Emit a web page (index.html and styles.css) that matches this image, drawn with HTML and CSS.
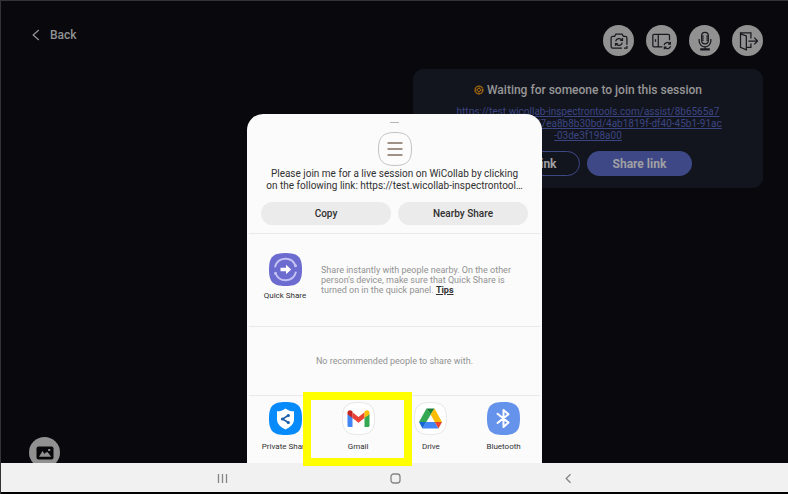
FILE: index.html
```html
<!DOCTYPE html>
<html lang="en">
<head>
<meta charset="utf-8">
<title>WiCollab session</title>
<link rel="stylesheet" href="styles.css">
</head>
<body>
<main class="session">
  <header class="topbar">
    <a class="back" href="#">
      <svg width="8" height="12" viewBox="0 0 8 12" fill="none" stroke="currentColor" stroke-width="1.3"><path d="M6.8 1 1.2 6l5.6 5"/></svg>
      Back
    </a>
    <div class="tools">
      <button class="round" aria-label="Switch camera">
        <svg viewBox="0 0 24 24"><path d="M15.500 20.500H4.500a2 2 0 0 1-2-2V8.500a2 2 0 0 1 2-2h2.200l1.600-2.700h7.400l1.600 2.700h2.200a2 2 0 0 1 2 2v8M18 20.500h3.500V18"/><path d="M8 12.500a4.200 4.200 0 0 1 7.600-1.600M16.200 8.500v2.800h-2.800M16 13.800a4.200 4.200 0 0 1-7.600 1.600M7.800 17.800V15h2.800"/></svg>
      </button>
      <button class="round" aria-label="Rotate screen">
        <svg viewBox="0 0 24 24"><path d="M12.500 19H2.500a1.500 1.500 0 0 1-1.500-1.500v-12A1.500 1.500 0 0 1 2.500 4h17A1.500 1.500 0 0 1 21 5.500V11M7.500 4v15M4.200 10v3"/><path d="M14.500 16.800a4 4 0 0 1 7-1.500M22 13v2.600h-2.600M22.300 18.200a4 4 0 0 1-7 1.500M14.800 22v-2.600h2.600"/></svg>
      </button>
      <button class="round" aria-label="Microphone">
        <svg viewBox="0 0 24 24"><rect x="8" y="1.500" width="8" height="14" rx="4"/><path d="M5 9.500V12a7 7 0 0 0 14 0V9.500M12 19v2M7 22.500v-1h10v1zM8.500 6h2M13.500 6h2M8.500 8.500h2M13.500 8.500h2M8.500 11h2M13.500 11h2"/></svg>
      </button>
      <button class="round" aria-label="Leave session">
        <svg viewBox="0 0 24 24"><path d="M3 3.500v16l7 3V6zM3 3.500V2.200h12.500V9M10 19.500h5.500V15M12.500 12H23M19.500 8l4 4-4 4"/></svg>
      </button>
    </div>
  </header>

  <section class="card">
    <h1 class="card-title">
      <svg width="10" height="10" viewBox="0 0 10 10" fill="none" stroke="#a5690f"><circle cx="5" cy="5" r="3.900" stroke-width="1.400" stroke-dasharray="2.200 .3"/><circle cx="5" cy="5" r="1.600"/><path d="M5 1v2.500M5 6.500V9M1 5h2.500M6.500 5H9" stroke-width=".7"/></svg>
      Waiting for someone to join this session
    </h1>
    <a class="card-link" href="#">https://test.wicollab-inspectrontools.com/assist/8b6565a7<br>-0c52-4f1e-9d3a-c47ea8b8b30bd/4ab1819f-df40-45b1-91ac<br>-03de3f198a00</a>
    <div class="card-actions">
      <button class="pill pill-outline">Copy link</button>
      <button class="pill pill-solid">Share link</button>
    </div>
  </section>

  <button class="round gallery" aria-label="Gallery">
    <svg viewBox="0 0 18 14"><rect class="frame" x=".5" y=".5" width="17" height="13" rx="2"/><path class="hills" d="M3 10.800 6.500 5l2 3 .8-1.200 2.200-.8 3.700 4.800zM12.200 3h2v2h-2z"/></svg>
  </button>
</main>

<nav class="sysbar">
  <button class="sys" aria-label="Recent apps"><svg width="11" height="11" viewBox="0 0 11 11"><path d="M1.500 1v9M5.500 1v9M9.500 1v9"/></svg></button>
  <button class="sys" aria-label="Home"><svg width="11" height="11" viewBox="0 0 11 11"><rect x="1" y="1" width="9" height="9" rx="2.800"/></svg></button>
  <button class="sys" aria-label="Go back"><svg width="11" height="11" viewBox="0 0 11 11"><path d="M7.500 1.200 3.200 5.500l4.300 4.300"/></svg></button>
</nav>

<section class="sheet" aria-label="Share">
  <div class="preview">
    <div class="handle"></div>
    <svg class="doc" viewBox="0 0 34 34"><path d="M17 .5C29 .5 33.500 5 33.500 17S29 33.500 17 33.500.5 29 .5 17 5 .5 17 .5z" fill="#fcfcfc" stroke="#c2c2c2"/><path d="M9.500 11h15M9.500 17h15M9.500 23h15" stroke="#a09187" stroke-width="2"/></svg>
    <p class="message">Please join me for a live session on WiCollab by clicking<br>on the following link: https://test.wicollab-inspectrontool…</p>
    <div class="preview-actions">
      <button class="soft">Copy</button>
      <button class="soft">Nearby Share</button>
    </div>
  </div>
  <div class="quick">
    <button class="app app-quick">
      <svg class="app-icon" viewBox="0 0 33 33"><path d="M16.500 0C29 0 33 4 33 16.500S29 33 16.500 33 0 29 0 16.500 4 0 16.500 0z" fill="#6c6bcf"/><path d="M6.200 13.500a10.700 10.700 0 0 1 20.200-1M26.800 19.500a10.700 10.700 0 0 1-20.200 1" fill="none" stroke="#c3c2f4" stroke-width="2" stroke-linecap="round"/><circle cx="26.500" cy="12.800" r="1.500" fill="#c3c2f4"/><circle cx="6.500" cy="20.200" r="1.500" fill="#c3c2f4"/><path d="M11.500 14.700h5.500v-3l5.200 4.800-5.200 4.800v-3h-5.500z" fill="#fff"/></svg>
      Quick Share
    </button>
    <p class="hint">Share instantly with people nearby. On the other person's device, make sure that Quick Share is turned on in the quick panel. <a class="tips" href="#">Tips</a></p>
  </div>
  <p class="empty">No recommended people to share with.</p>
  <div class="apps">
    <button class="app">
      <svg class="app-icon" viewBox="0 0 33 33"><path d="M16.500 0C29 0 33 4 33 16.500S29 33 16.500 33 0 29 0 16.500 4 0 16.500 0z" fill="#078bfb"/><path d="M16.500 6.500c2.500 2 5.500 2.800 8.500 2.800v8c0 5-4 8-8.500 10.200C12 25.300 8 22.300 8 17.300v-8c3 0 6-.8 8.500-2.800z" fill="#fff"/><path d="M19.300 13.500 13.500 17l5.800 3.500" fill="none" stroke="#1b5fa8" stroke-width="1.500"/><g fill="#1b5fa8"><circle cx="19.300" cy="13.500" r="1.600"/><circle cx="13.500" cy="17" r="1.600"/><circle cx="19.300" cy="20.500" r="1.600"/></g></svg>
      Private Share
    </button>
    <button class="app app-marked">
      <svg class="app-icon" viewBox="0 0 33 33"><path d="M16.500 .5C28.500 .5 32.500 4.500 32.500 16.500S28.500 32.500 16.500 32.500 .5 28.500 .5 16.500 4.500 .5 16.500 .5z" fill="#fff" stroke="#e6e6e6"/><path d="M5.500 12v11.500q0 1.500 1.500 1.500h3.500V15z" fill="#4285f4"/><path d="M27.500 12v11.500q0 1.500-1.500 1.500h-3.500V15z" fill="#34a853"/><path d="M10.500 10.300 16.500 15l6-4.700V16l-6 4.700-6-4.700z" fill="#ea4335"/><path d="M5.500 12v-1.200c0-2.600 2.500-3.200 4-2l1 .8V16l-5-3.800z" fill="#c5221f"/><path d="M27.500 12v-1.200c0-2.600-2.500-3.200-4-2l-1 .8V16l5-3.800z" fill="#fbbc04"/></svg>
      Gmail
    </button>
    <button class="app">
      <svg class="app-icon" viewBox="0 0 33 33"><path d="M16.500 .5C28.500 .5 32.500 4.500 32.500 16.500S28.500 32.500 16.500 32.500 .5 28.500 .5 16.500 4.500 .5 16.500 .5z" fill="#fff" stroke="#e6e6e6"/><path d="M12.500 6.500 5 20h7.300l4.500-7.500z" fill="#34a853"/><path d="M12.500 6.500h8L16.700 12.500z" fill="#188038"/><path d="M20.500 6.500 28 20h-7.300l-4-7.500z" fill="#fbbc04"/><path d="M12.300 20h8.400l3.800 6.500H8.500z" fill="#4285f4"/><path d="M5 20h7.300l-3.800 6.500z" fill="#1967d2"/><path d="M28 20h-7.300l3.800 6.500z" fill="#ea4335"/></svg>
      Drive
    </button>
    <button class="app">
      <svg class="app-icon" viewBox="0 0 33 33"><path d="M16.500 0C29 0 33 4 33 16.500S29 33 16.500 33 0 29 0 16.500 4 0 16.500 0z" fill="#6592ea"/><path d="m10.500 11.800 11 8.800-5 4.400V8l5 4.200-11 8.800" fill="none" stroke="#fff" stroke-width="2" stroke-linejoin="round" stroke-linecap="round"/></svg>
      Bluetooth
    </button>
  </div>
</section>
</body>
</html>
```
FILE: styles.css
```css
* {
  box-sizing: border-box;
}

body {
  margin: 0;
  height: 100vh;
  display: flex;
  flex-direction: column;
  position: relative;
  overflow: hidden;
  background: #000;
  border: 1px solid #333438;
  border-width: 1px 0 0 1px;
  font-family: Roboto, "Liberation Sans", sans-serif;
}

button {
  border: 0;
  padding: 0;
  background: none;
  font: inherit;
  color: inherit;
}

p,
h1 {
  margin: 0;
}

svg {
  display: block;
  flex: none;
}

.session {
  flex: 1;
  min-height: 0;
  position: relative;
  display: flex;
  flex-direction: column;
  padding: 24px 25px 0 31px;
  background: #08080d;
}

.topbar {
  display: flex;
  justify-content: space-between;
  align-items: flex-start;
}

.back {
  display: flex;
  align-items: center;
  gap: 10px;
  font-size: 12px;
  line-height: 20px;
  font-weight: 500;
  color: #929292;
  text-decoration: none;
}

.tools {
  display: flex;
  gap: 12px;
}

.round {
  width: 31px;
  height: 31px;
  border-radius: 50%;
  display: grid;
  place-items: center;
  background: #919191;
}

.round svg {
  width: 20px;
  height: 20px;
  fill: none;
  stroke: #18181e;
  stroke-width: 1.5;
}

.card {
  align-self: flex-end;
  width: 350px;
  margin-top: 13px;
  padding: 12px 24px;
  border-radius: 10px;
  background: #13151e;
  display: flex;
  flex-direction: column;
  align-items: center;
}

.card-title {
  display: flex;
  align-items: center;
  gap: 3px;
  font-size: 12px;
  line-height: 18px;
  font-weight: 500;
  color: #979797;
}

.card-link {
  margin-top: 7px;
  font-size: 10px;
  line-height: 12px;
  text-align: center;
  color: #3b4583;
}

.card-actions {
  display: flex;
  gap: 7px;
  margin-top: 9px;
}

.pill {
  height: 25px;
  border-radius: 13px;
  font-size: 12px;
  font-weight: 700;
  color: #a0a0a3;
}

.pill-outline {
  padding: 0 22px;
  border: 1px solid #3e4887;
}

.pill-solid {
  padding: 0 26px;
  background: #3e4887;
}

.gallery {
  position: absolute;
  left: 28px;
  bottom: -5px;
}

.gallery svg {
  width: 18px;
  height: 14px;
  stroke: none;
}

.gallery .frame {
  fill: #08080a;
}

.gallery .hills {
  fill: #919191;
}

.sysbar {
  position: relative;
  z-index: 1;
  display: flex;
  justify-content: center;
  gap: 162px;
  height: 29px;
  margin-bottom: 2px;
  padding: 2px 0 0 2px;
  background: #f1f1f1;
}

.sys {
  display: grid;
  place-items: center;
}

.sys svg {
  fill: none;
  stroke: #858585;
  stroke-width: 1.3;
}

.sheet {
  position: absolute;
  z-index: 2;
  bottom: 31px;
  left: 0;
  right: 0;
  width: 295px;
  margin: 0 auto;
  border-radius: 16px 16px 0 0;
  background: #fbfbfb;
  color: #303030;
}

.preview,
.quick,
.empty,
.apps {
  margin: 0 2px;
}

.preview {
  display: flex;
  flex-direction: column;
  align-items: center;
  padding: 8px 12px;
}

.handle {
  width: 9px;
  height: 1px;
  background: #b5b5b5;
}

.doc {
  width: 34px;
  height: 34px;
  margin-top: 9px;
}

.message {
  margin-top: 2px;
  font-size: 10px;
  line-height: 12px;
  text-align: center;
  white-space: nowrap;
}

.preview-actions {
  align-self: stretch;
  display: flex;
  gap: 7px;
  margin-top: 10px;
}

.soft {
  flex: 1;
  height: 23px;
  border-radius: 12px;
  background: #ebebeb;
  font-size: 10px;
  font-weight: 500;
}

.quick {
  display: flex;
  align-items: flex-start;
  height: 93px;
  padding-top: 19px;
  border-top: 1px solid #e9e9e9;
}

.hint {
  padding: 12px 24px 0 0;
  font-size: 9px;
  line-height: 10px;
  color: #929292;
}

.tips {
  color: #303030;
  font-weight: 700;
}

.empty {
  height: 69px;
  border-top: 1px solid #e9e9e9;
  font-size: 9px;
  line-height: 69px;
  text-align: center;
  color: #929292;
}

.apps {
  display: grid;
  grid-template-columns: repeat(4, 1fr);
  padding: 6px 0 11px;
  border-top: 1px solid #e9e9e9;
}

.app {
  flex: none;
  min-width: 72px;
  display: flex;
  flex-direction: column;
  align-items: center;
  gap: 7px;
  font-size: 8px;
  line-height: 10px;
  white-space: nowrap;
}

.app-quick {
  gap: 5px;
}

.app-icon {
  width: 33px;
  height: 33px;
}

.app-marked {
  position: relative;
}

/* Highlight frame drawn round the chosen app */
.app-marked::after {
  content: "";
  position: absolute;
  inset: -10px -17px -14px -19px;
  border: 8px solid #ff0;
}
```
